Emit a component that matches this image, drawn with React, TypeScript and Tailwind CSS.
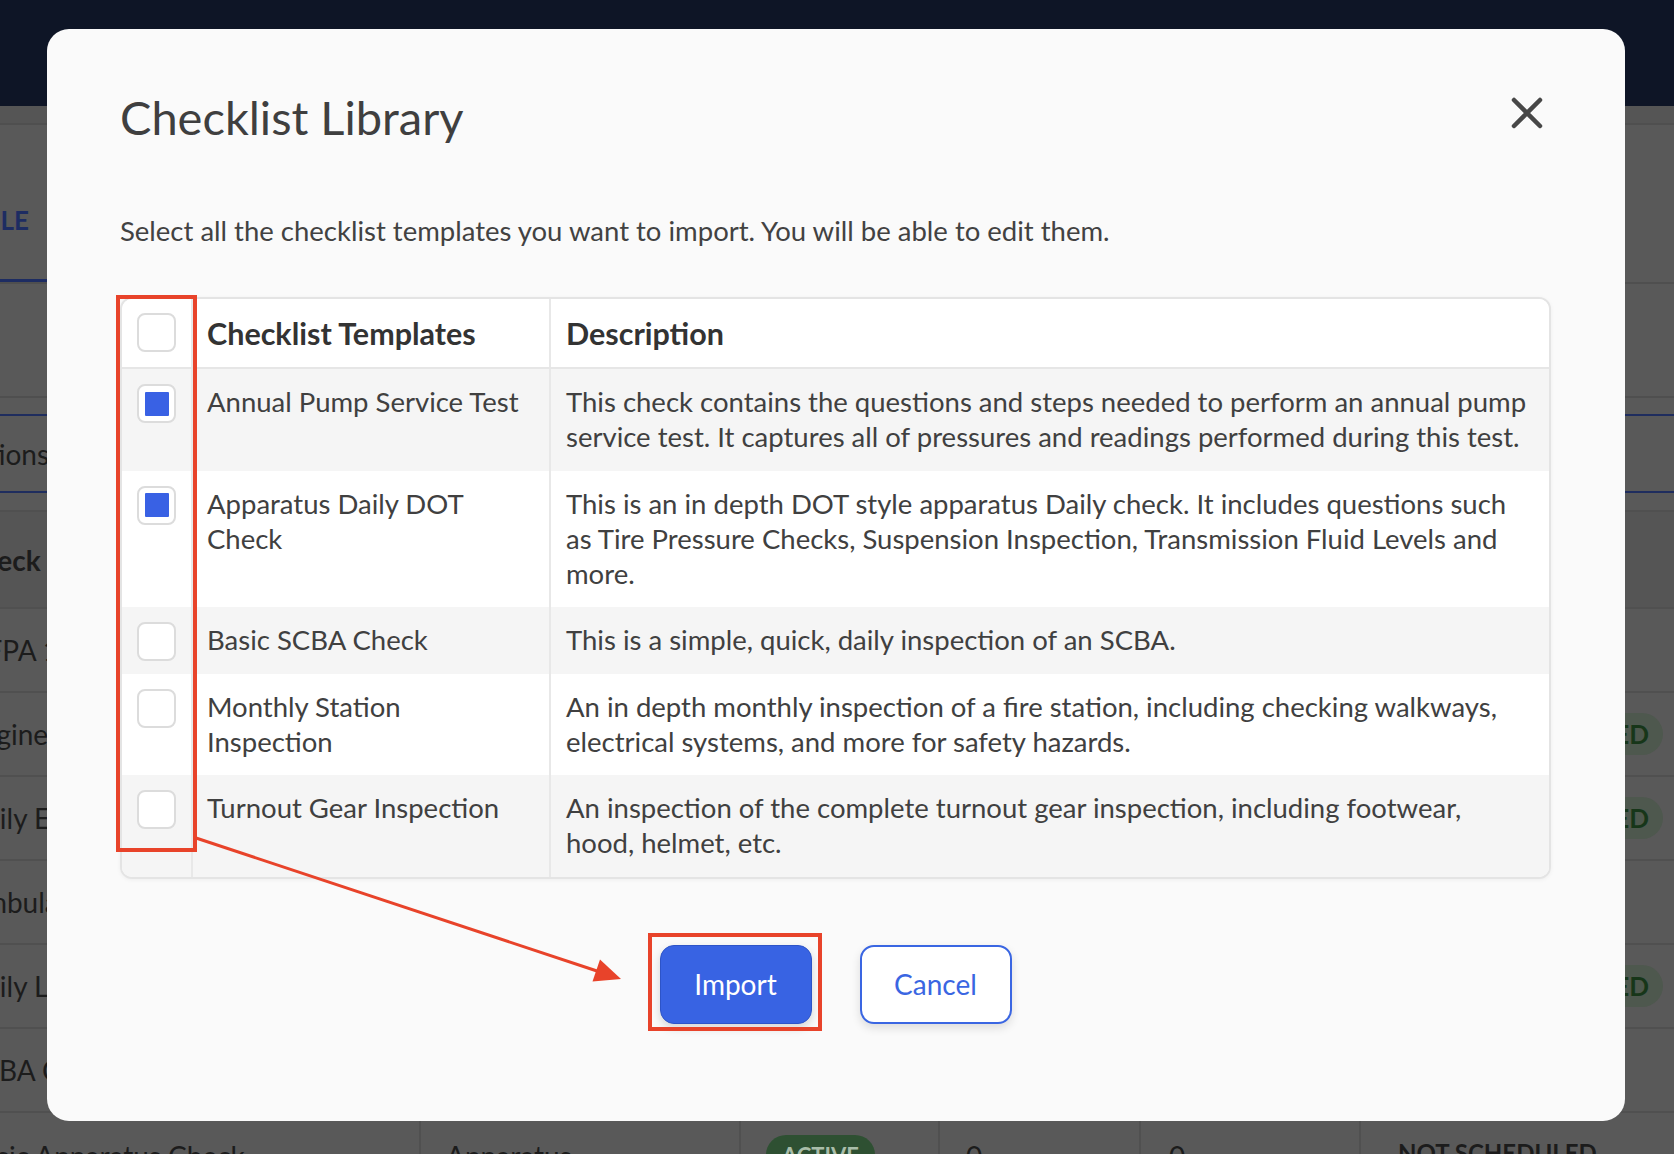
import React from "react";

const rows = [
  {
    name: "Annual Pump Service Test",
    desc: "This check contains the questions and steps needed to perform an annual pump service test. It captures all of pressures and readings performed during this test.",
    checked: true,
  },
  {
    name: "Apparatus Daily DOT Check",
    desc: "This is an in depth DOT style apparatus Daily check. It includes questions such as Tire Pressure Checks, Suspension Inspection, Transmission Fluid Levels and more.",
    checked: true,
  },
  {
    name: "Basic SCBA Check",
    desc: "This is a simple, quick, daily inspection of an SCBA.",
    checked: false,
  },
  {
    name: "Monthly Station Inspection",
    desc: "An in depth monthly inspection of a fire station, including checking walkways, electrical systems, and more for safety hazards.",
    checked: false,
  },
  {
    name: "Turnout Gear Inspection",
    desc: "An inspection of the complete turnout gear inspection, including footwear, hood, helmet, etc.",
    checked: false,
  },
];

const bgRows = [
  { name: "NFPA 1901 Pump Test", pill: false },
  { name: "Engine Check", pill: true },
  { name: "Daily Engine Check", pill: true },
  { name: "Ambulance Check", pill: false },
  { name: "Daily Ladder Check", pill: true },
  { name: "SCBA Check", pill: false },
];

function Checkbox({ checked }: { checked: boolean }) {
  return (
    <div className="flex h-[39px] w-[39px] shrink-0 items-center justify-center rounded-[8px] border-2 border-[#dcdcdc] bg-white">
      {checked && <div className="h-[24px] w-[24px] rounded-[1px] bg-[#3961e4]" />}
    </div>
  );
}

function BgRow({ name, pill }: { name: string; pill: boolean }) {
  return (
    <div className="flex h-[84px] items-center border-b-2 border-[#505050]">
      <div className="w-[421px] shrink-0">
        <div className="w-[60px] overflow-hidden">
          <div className="-ml-[35px] whitespace-nowrap text-[28px] text-[#1c1c1c]">{name}</div>
        </div>
      </div>
      <div className="flex-1" />
      <div className="flex w-[313px] justify-end pr-[11px]">
        {pill && (
          <div className="flex h-[42px] items-center rounded-full bg-[#4e584e] pl-[20px] pr-[14px] text-[26px] font-bold text-[#173619]">
            SCHEDULED
          </div>
        )}
      </div>
    </div>
  );
}

export default function App() {
  return (
    <div className="relative h-[1154px] w-[1674px] overflow-hidden bg-[#595959] font-['Lato',sans-serif]">
      {/* background page (dimmed) */}
      <div className="h-[106px] bg-[#0e1526]" />
      <div className="h-[19px] border-b-2 border-[#4f4f4f] bg-[#555555]" />
      <div className="flex h-[159px] flex-col justify-end border-b-2 border-[#4f4f4f]">
        <div className="-ml-[131px] mb-[44px] w-[160px] text-right text-[26px] font-bold leading-[30px] text-[#1d2c62]">
          SCHEDULE
        </div>
        <div className="h-[3px] w-[200px] bg-[#1d2c62]" />
      </div>
      <div className="h-[114px] border-b-2 border-[#4f4f4f]" />
      <div className="mt-[16px] flex h-[79px] items-center border-y-2 border-[#1f2d5e]">
        <div className="w-[60px] overflow-hidden">
          <div className="-ml-[91px] whitespace-nowrap text-[28px] text-[#1c1c1c]">Inspections</div>
        </div>
      </div>
      <div className="mt-[17px] flex h-[99px] items-center border-y-2 border-[#505050] bg-[#555555]">
        <div className="w-[60px] overflow-hidden">
          <div className="-ml-[37px] whitespace-nowrap text-[28px] font-bold text-[#1c1c1c]">Check Name</div>
        </div>
      </div>
      {bgRows.map((r) => (
        <BgRow key={r.name} name={r.name} pill={r.pill} />
      ))}
      <div className="flex h-[84px] text-[28px] text-[#1c1c1c]">
        <div className="w-[421px] shrink-0 border-r-2 border-[#505050] pt-[22px]">
          <div className="-ml-[35px] whitespace-nowrap">Basic Apparatus Check</div>
        </div>
        <div className="w-[320px] shrink-0 border-r-2 border-[#505050] pl-[25px] pt-[22px]">Apparatus</div>
        <div className="w-[199px] shrink-0 border-r-2 border-[#505050] pl-[25px] pt-[22px]">
          <div className="flex h-[40px] w-[109px] items-center justify-center rounded-full bg-[#2e5032] text-[22px] font-bold text-[#a9bda9]">
            ACTIVE
          </div>
        </div>
        <div className="w-[201px] shrink-0 border-r-2 border-[#505050] pl-[26px] pt-[22px]">0</div>
        <div className="w-[220px] shrink-0 border-r-2 border-[#505050] pl-[28px] pt-[22px]">0</div>
        <div className="flex-1 pl-[37px] pt-[22px] text-[24px] font-bold">NOT SCHEDULED</div>
      </div>

      {/* modal */}
      <div className="absolute left-[47px] top-[29px] flex h-[1092px] w-[1578px] flex-col rounded-[22px] bg-[#fafafa] pl-[73px] pr-[74px] pt-[60px]">
        <div className="flex h-[56px] items-start justify-between">
          <h1 className="text-[47px] leading-[56px] text-[#3f3f3f]">Checklist Library</h1>
          <svg className="mr-[8px] mt-[8px]" width="32" height="32" viewBox="0 0 32 32" fill="none">
            <path d="M3 3 L29 29 M29 3 L3 29" stroke="#474747" strokeWidth="4.5" strokeLinecap="round" />
          </svg>
        </div>
        <p className="mt-[68px] text-[27.5px] leading-[35px] text-[#424242]">
          Select all the checklist templates you want to import. You will be able to edit them.
        </p>

        <div className="mt-[49px] overflow-hidden rounded-[12px] border-2 border-[#e4e4e4] bg-white shadow-[0_1px_4px_rgba(0,0,0,0.05)]">
          <div className="grid grid-cols-[71px_358px_1fr] border-b-2 border-[#e6e6e6] bg-white">
            <div className="flex justify-center border-r-2 border-[#e8e8e8] pb-[15px] pt-[14px]">
              <Checkbox checked={false} />
            </div>
            <div className="border-r-2 border-[#e8e8e8] pb-[15px] pl-[14px] pr-[14px] pt-[17px] text-[30.5px] font-bold leading-[35px] text-[#333333]">
              Checklist Templates
            </div>
            <div className="pb-[15px] pl-[15px] pr-[15px] pt-[17px] text-[30.5px] font-bold leading-[35px] text-[#333333]">
              Description
            </div>
          </div>
          {rows.map((r, i) => (
            <div
              key={r.name}
              className={`grid grid-cols-[71px_358px_1fr] ${i % 2 === 0 ? "bg-[#f5f5f5]" : "bg-white"}`}
            >
              <div className="flex items-start justify-center border-r-2 border-[#e8e8e8] pt-[15px]">
                <Checkbox checked={r.checked} />
              </div>
              <div className="border-r-2 border-[#e8e8e8] pb-[16.5px] pl-[14px] pr-[20px] pt-[15px] text-[27.5px] leading-[35px] text-[#404040]">
                {r.name}
              </div>
              <div className="pb-[16.5px] pl-[15px] pr-[15px] pt-[15px] text-[27.5px] leading-[35px] text-[#404040]">
                {r.desc}
              </div>
            </div>
          ))}
        </div>

        <div className="mt-[66px] flex justify-center gap-[48px]">
          <button className="h-[79px] w-[152px] rounded-[14px] border border-[#2d54c8] bg-[#3863e3] text-[28px] text-white shadow-[0_4px_10px_rgba(0,0,0,0.15)]">
            Import
          </button>
          <button className="h-[79px] w-[152px] rounded-[14px] border-2 border-[#3a66e2] bg-white text-[28px] text-[#3a66e2] shadow-[0_4px_10px_rgba(0,0,0,0.12)]">
            Cancel
          </button>
        </div>
      </div>

      {/* annotations */}
      <svg className="pointer-events-none absolute left-0 top-0" width="1674" height="1154" viewBox="0 0 1674 1154" fill="none">
        <rect x="118" y="297" width="77" height="553" stroke="#e8432a" strokeWidth="4" />
        <rect x="650" y="935" width="170" height="94" stroke="#e8432a" strokeWidth="4" />
        <line x1="196" y1="838" x2="597" y2="971" stroke="#e8432a" strokeWidth="3" />
        <polygon points="621,979 592.5,981.5 600,959.5" fill="#e8432a" />
      </svg>
    </div>
  );
}
